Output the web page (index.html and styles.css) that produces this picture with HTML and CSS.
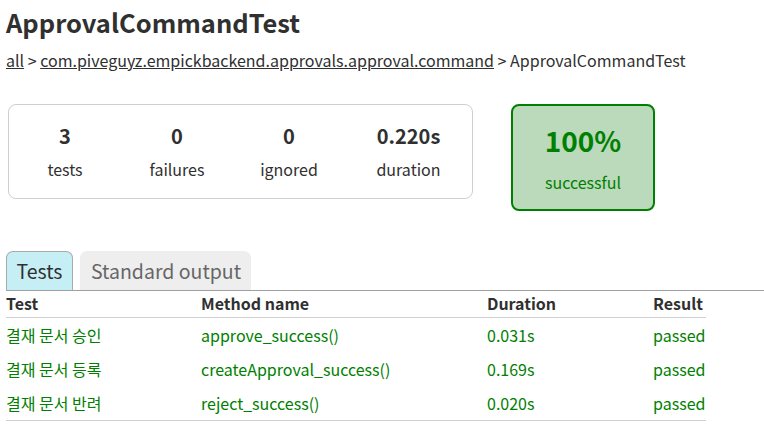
FILE: index.html
```html
<!DOCTYPE html>
<html>
<head>
<meta charset="utf-8">
<link rel="stylesheet" href="styles.css">
</head>
<body>
<div class="content">
  <h1 class="title">ApprovalCommandTest</h1>
  <div class="breadcrumbs"><a href="#">all</a> &gt; <a href="#">com.piveguyz.empickbackend.approvals.approval.command</a> &gt; ApprovalCommandTest</div>
  <div class="summary">
    <div class="summary-group">
      <div class="info-box"><div class="counter">3</div><p class="label">tests</p></div>
      <div class="info-box"><div class="counter">0</div><p class="label">failures</p></div>
      <div class="info-box"><div class="counter">0</div><p class="label">ignored</p></div>
      <div class="info-box wide"><div class="counter">0.220s</div><p class="label">duration</p></div>
    </div>
    <div class="success-rate">
      <div class="percent">100%</div>
      <p class="label">successful</p>
    </div>
  </div>
  <ul class="tabs">
    <li class="tab selected">Tests</li>
    <li class="tab">Standard output</li>
  </ul>
  <table class="tests">
    <thead>
      <tr><th class="c-test">Test</th><th class="c-method">Method name</th><th class="c-dur">Duration</th><th class="c-res">Result</th></tr>
    </thead>
    <tbody>
      <tr><td>결재 문서 승인</td><td>approve_success()</td><td>0.031s</td><td>passed</td></tr>
      <tr><td>결재 문서 등록</td><td>createApproval_success()</td><td>0.169s</td><td>passed</td></tr>
      <tr><td>결재 문서 반려</td><td>reject_success()</td><td>0.020s</td><td>passed</td></tr>
    </tbody>
  </table>
</div>
</body>
</html>
```
FILE: styles.css
```css
html, body {
  margin: 0;
  padding: 0;
  background: #ffffff;
}
body {
  font-family: "Noto Sans CJK KR", "Noto Sans", sans-serif;
  font-size: 16px;
  color: #303030;
}
.content {
  padding: 4px 0 0 6px;
}
.title {
  margin: 0;
  font-size: 25.5px;
  font-weight: 700;
  line-height: 36px;
  color: #303030;
}
.breadcrumbs {
  margin-top: 8px;
  line-height: 24px;
  color: #303030;
}
.breadcrumbs a {
  color: #303030;
  text-decoration: underline;
}
.summary {
  display: flex;
  align-items: flex-start;
  margin-top: 32px;
  margin-left: 2px;
}
.summary-group {
  display: flex;
  width: 463px;
  height: 93px;
  border: 1px solid #cfcfcf;
  border-radius: 8px;
}
.info-box {
  width: 112px;
  text-align: center;
  padding-top: 19px;
}
.info-box.wide {
  width: 127px;
}
.counter {
  font-size: 20px;
  font-weight: 700;
  line-height: 24px;
}
.label {
  margin: 10px 0 0 0;
  line-height: 22px;
}
.success-rate {
  margin-left: 38px;
  width: 144px;
  height: 107px;
  border: 2px solid #008000;
  border-radius: 8px;
  background: #bbd9bb;
  color: #008000;
  text-align: center;
  box-sizing: border-box;
  padding-top: 17px;
}
.percent {
  font-size: 28px;
  font-weight: 700;
  line-height: 34px;
}
.success-rate .label {
  margin-top: 14px;
}
.tabs {
  list-style: none;
  margin: 40px 0 0 0;
  padding: 0;
  display: flex;
  gap: 7px;
  border-bottom: 1px solid #a0a0a0;
  height: 39px;
}
.tab {
  font-size: 19.5px;
  line-height: 39px;
  padding: 0 10px 0 11px;
  border-radius: 7px 7px 0 0;
  background: #eeeeee;
  color: #666666;
}
.tab.selected {
  background: #c5eff5;
  border: 1px solid #aaaaaa;
  border-bottom: none;
  color: #303030;
  line-height: 38px;
  padding: 0 9.5px;
}
.tests {
  border-collapse: collapse;
  margin-top: 0;
  width: 700px;
}
.tests th {
  text-align: left;
  font-weight: 700;
  line-height: 22px;
  padding: 1px 0 3px 0;
  border-bottom: 1px solid #d0d0d0;
}
.tests td {
  line-height: 24px;
  padding: 5px 0 5px 0;
  color: #008000;
}
.tests tbody tr:last-child td {
  border-bottom: 1px solid #d0d0d0;
}
.c-test { width: 195px; }
.c-method { width: 286px; }
.c-dur { width: 166px; }
.c-res { width: 53px; }
```
